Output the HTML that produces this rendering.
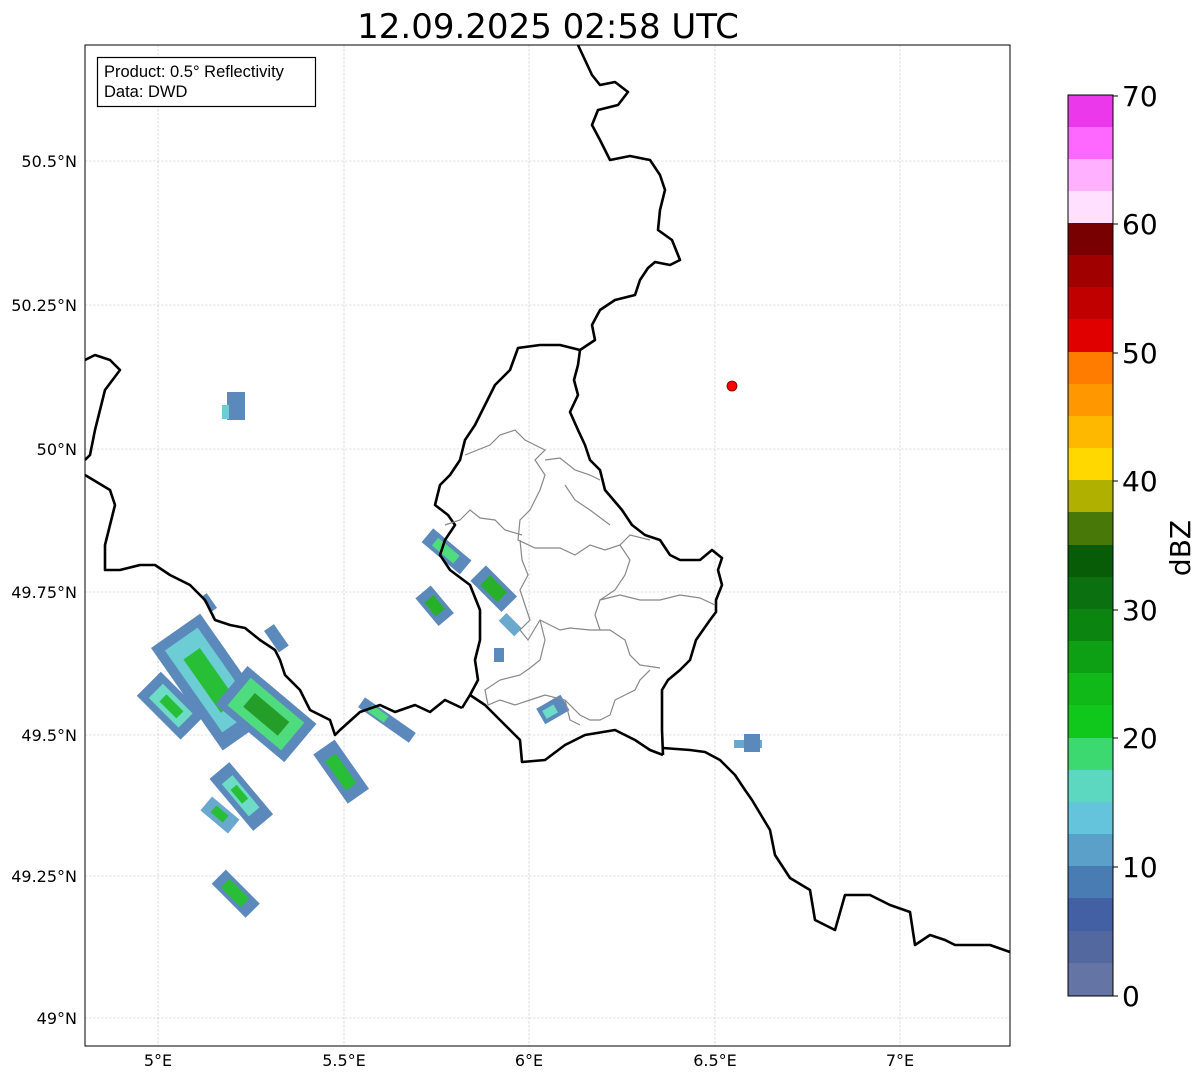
<!DOCTYPE html>
<html><head><meta charset="utf-8"><style>
body{margin:0;background:#fff;width:1202px;height:1081px;overflow:hidden;font-family:"Liberation Sans","DejaVu Sans",sans-serif}
svg{position:absolute;left:0;top:0}
</style></head><body>
<svg width="1202" height="1081" viewBox="0 0 1202 1081" xmlns="http://www.w3.org/2000/svg" font-family="DejaVu Sans, Liberation Sans, sans-serif">
<defs><clipPath id="c"><rect x="85" y="45" width="925" height="1001"/></clipPath></defs>
<text x="548" y="38" font-size="34" text-anchor="middle">12.09.2025 02:58 UTC</text>
<g clip-path="url(#c)">
<g stroke="#c4c4c4" stroke-width="0.6" stroke-dasharray="2.5,1.5">
<line x1="158" y1="45" x2="158" y2="1046"/><line x1="344" y1="45" x2="344" y2="1046"/><line x1="529" y1="45" x2="529" y2="1046"/><line x1="715" y1="45" x2="715" y2="1046"/><line x1="900" y1="45" x2="900" y2="1046"/>
<line x1="85" y1="161" x2="1010" y2="161"/><line x1="85" y1="305" x2="1010" y2="305"/><line x1="85" y1="449" x2="1010" y2="449"/><line x1="85" y1="592" x2="1010" y2="592"/><line x1="85" y1="735" x2="1010" y2="735"/><line x1="85" y1="876" x2="1010" y2="876"/><line x1="85" y1="1018" x2="1010" y2="1018"/>
</g>
<g opacity="0.9">
<g transform="rotate(55 210 680)"><rect x="150" y="650" width="125" height="60" fill="#4a7cb4"/><rect x="160" y="660" width="100" height="40" fill="#5cc8d0"/><rect x="178" y="670" width="65" height="20" fill="#10b820"/></g>
<g transform="rotate(45 170 705)"><rect x="140" y="688" width="62" height="34" fill="#4a7cb4"/><rect x="150" y="695" width="42" height="20" fill="#5cd8c0"/><rect x="160" y="700" width="24" height="10" fill="#10b820"/></g>
<g transform="rotate(40 265 712)"><rect x="222" y="688" width="90" height="50" fill="#4a7cb4"/><rect x="232" y="695" width="70" height="36" fill="#3cd870"/><rect x="245" y="704" width="45" height="18" fill="#0c9410"/></g>
<g transform="rotate(55 340 770)"><rect x="312" y="757" width="60" height="26" fill="#4a7cb4"/><rect x="324" y="764" width="36" height="13" fill="#10b820"/></g>
<g transform="rotate(50 240 795)"><rect x="208" y="782" width="68" height="26" fill="#4a7cb4"/><rect x="220" y="788" width="42" height="14" fill="#5cd8c0"/><rect x="230" y="791" width="18" height="8" fill="#10b820"/></g>
<g transform="rotate(40 220 815)"><rect x="202" y="806" width="36" height="18" fill="#5aa0c8"/><rect x="211" y="810" width="16" height="9" fill="#10b820"/></g>
<g transform="rotate(45 235 893)"><rect x="212" y="883" width="48" height="20" fill="#4a7cb4"/><rect x="221" y="887" width="28" height="12" fill="#10b820"/></g>
<g transform="rotate(35 388 722)"><rect x="355" y="715" width="62" height="12" fill="#4a7cb4"/><rect x="365" y="717" width="20" height="8" fill="#3cd870"/></g>
<g transform="rotate(55 275 638)"><rect x="263" y="631" width="26" height="12" fill="#4a7cb4"/></g>
<g transform="rotate(55 208 602)"><rect x="200" y="598" width="18" height="7" fill="#4a7cb4"/></g>
<rect x="227" y="392" width="18" height="28" fill="#4a7cb4"/><rect x="222" y="405" width="7" height="14" fill="#5cc8d0"/>
<g transform="rotate(40 445 550)"><rect x="422" y="541" width="50" height="18" fill="#4a7cb4"/><rect x="432" y="545" width="28" height="10" fill="#3cd870"/></g>
<g transform="rotate(45 493 588)"><rect x="472" y="577" width="44" height="22" fill="#4a7cb4"/><rect x="482" y="581" width="24" height="14" fill="#10a814"/></g>
<g transform="rotate(45 510 625)"><rect x="499" y="619" width="22" height="11" fill="#5aa0c8"/></g>
<g transform="rotate(50 434 605)"><rect x="417" y="595" width="36" height="20" fill="#4a7cb4"/><rect x="426" y="599" width="18" height="12" fill="#10a814"/></g>
<rect x="494" y="648" width="10" height="14" fill="#4a7cb4"/>
<g transform="rotate(-30 552 710)"><rect x="539" y="701" width="28" height="18" fill="#4a7cb4"/><rect x="543" y="706" width="13" height="9" fill="#5cd8c0"/></g>
<rect x="734" y="740" width="28" height="8" fill="#5aa0c8"/><rect x="744" y="734" width="16" height="18" fill="#4a7cb4"/>
</g>
<g fill="none" stroke="#000" stroke-width="2.6" stroke-linejoin="round">
<polyline points="578,45 585,60 592,75 600,85 615,82 628,92 618,105 598,110 592,125 600,140 610,160 630,156 650,160 660,175 665,190 660,210 658,230 672,240 680,260 670,265 655,262 648,268 640,280 635,295 615,300 600,310 592,325 595,340 580,350 578,365 574,380 578,395 570,412 578,430 585,445 590,460 600,470 605,490 622,510 632,525 645,535 660,540 670,555 680,560 700,560 712,550 722,558 718,570 722,585 716,600 716,612 710,620 696,640 690,660 680,670 668,680 662,690 662,710 662,730 663,755"/>
<polyline points="663,748 690,750 705,752 720,760 735,775 745,790 752,800 770,830 775,855 790,878 810,890 815,920 835,930 845,895 870,895 890,905 910,912 915,945 930,935 945,940 955,945 975,945 990,945 1010,952"/>
<polyline points="580,350 560,345 540,345 518,348 510,370 495,385 485,405 475,425 465,440 460,460 450,475 440,485 435,505 448,515 455,525 445,540 440,555 450,570 470,585 480,610 480,640 475,660 478,680 470,695 462,708"/>
<polyline points="470,695 485,705 500,720 520,740 522,762 545,760 565,745 585,735 615,730 635,740 650,750 663,755"/>
<polyline points="462,708 445,700 430,712 415,705 395,712 380,705 360,712 340,730 335,735 330,720 310,710 300,690 285,675 280,660 275,650 260,640 245,628 230,625 215,620 205,600 190,585 170,575 155,565 140,565 120,570 105,570 105,545 115,505 110,490 90,478 85,475"/>
<polyline points="85,360 95,355 110,360 120,370 105,390 100,410 95,430 90,455 85,460"/>
</g>
<g fill="none" stroke="#888" stroke-width="1.2">
<polyline points="465,455 490,445 500,435 515,430 525,440 545,450 535,460 545,475 540,490 530,510 520,520 518,540 535,548 560,548 575,555 590,545 605,550 620,545 630,535 650,540"/>
<polyline points="445,525 460,520 470,510 480,518 495,520 505,530 522,535"/>
<polyline points="545,460 560,458 575,470 590,475 600,480"/>
<polyline points="565,485 575,500 590,510 610,525"/>
<polyline points="520,540 522,560 528,575 520,590 525,605 530,620 520,630 528,640 540,620 560,630 570,628 590,630 610,630 625,640 630,655 640,665 660,668"/>
<polyline points="620,545 630,560 625,575 615,590 600,600 595,615 600,630"/>
<polyline points="600,600 620,595 640,600 660,600 680,595 700,598 715,605"/>
<polyline points="540,620 545,640 540,660 530,668 520,675 500,680 485,690 488,705 500,700 515,705 530,700 545,695 565,700 580,715 590,720 600,720 610,715 615,700 625,695 635,690 640,680 650,670"/>
<polyline points="565,700 570,720 580,725"/>
</g>
<circle cx="732" cy="386" r="5" fill="#f00" stroke="#600" stroke-width="0.8"/>
</g>
<rect x="85" y="45" width="925" height="1001" fill="none" stroke="#000" stroke-width="1"/>
<rect x="97.5" y="57.5" width="218" height="49" fill="#fff" stroke="#000" stroke-width="1.2"/>
<text x="104" y="77" font-size="16.5" font-family="Liberation Sans, sans-serif">Product: 0.5° Reflectivity</text>
<text x="104" y="97" font-size="16.5" font-family="Liberation Sans, sans-serif">Data: DWD</text>
<g font-size="16" text-anchor="end">
<text x="77" y="167">50.5°N</text><text x="77" y="311">50.25°N</text><text x="77" y="455">50°N</text><text x="77" y="598">49.75°N</text><text x="77" y="741">49.5°N</text><text x="77" y="882">49.25°N</text><text x="77" y="1024">49°N</text>
</g>
<g font-size="16" text-anchor="middle">
<text x="158" y="1066">5°E</text><text x="344" y="1066">5.5°E</text><text x="529" y="1066">6°E</text><text x="715" y="1066">6.5°E</text><text x="900" y="1066">7°E</text>
</g>
<g>
<rect x="1068" y="95" width="45" height="33" fill="#ea38ea"/>
<rect x="1068" y="127" width="45" height="33" fill="#ff68ff"/>
<rect x="1068" y="159" width="45" height="33" fill="#ffb0ff"/>
<rect x="1068" y="191" width="45" height="33" fill="#ffe0ff"/>
<rect x="1068" y="223" width="45" height="33" fill="#780000"/>
<rect x="1068" y="255" width="45" height="33" fill="#a00000"/>
<rect x="1068" y="287" width="45" height="33" fill="#c00000"/>
<rect x="1068" y="319" width="45" height="34" fill="#e00000"/>
<rect x="1068" y="352" width="45" height="33" fill="#ff7c00"/>
<rect x="1068" y="384" width="45" height="33" fill="#ff9800"/>
<rect x="1068" y="416" width="45" height="33" fill="#ffb800"/>
<rect x="1068" y="448" width="45" height="33" fill="#ffd800"/>
<rect x="1068" y="480" width="45" height="33" fill="#b0b000"/>
<rect x="1068" y="512" width="45" height="34" fill="#487808"/>
<rect x="1068" y="545" width="45" height="33" fill="#085c08"/>
<rect x="1068" y="577" width="45" height="33" fill="#0a7010"/>
<rect x="1068" y="609" width="45" height="33" fill="#0c8410"/>
<rect x="1068" y="641" width="45" height="33" fill="#0ea014"/>
<rect x="1068" y="673" width="45" height="33" fill="#10b818"/>
<rect x="1068" y="705" width="45" height="34" fill="#10c81c"/>
<rect x="1068" y="738" width="45" height="33" fill="#3cd870"/>
<rect x="1068" y="770" width="45" height="33" fill="#5cd8c0"/>
<rect x="1068" y="802" width="45" height="33" fill="#64c4dc"/>
<rect x="1068" y="834" width="45" height="33" fill="#5aa0c8"/>
<rect x="1068" y="866" width="45" height="33" fill="#4a7cb4"/>
<rect x="1068" y="898" width="45" height="34" fill="#4460a4"/>
<rect x="1068" y="931" width="45" height="33" fill="#5468a0"/>
<rect x="1068" y="963" width="45" height="33" fill="#6474a4"/>
<rect x="1068" y="95" width="45" height="901" fill="none" stroke="#000" stroke-width="1"/>
<g stroke="#000"><line x1="1113" y1="96" x2="1118" y2="96"/><line x1="1113" y1="224" x2="1118" y2="224"/><line x1="1113" y1="353" x2="1118" y2="353"/><line x1="1113" y1="481" x2="1118" y2="481"/><line x1="1113" y1="610" x2="1118" y2="610"/><line x1="1113" y1="738" x2="1118" y2="738"/><line x1="1113" y1="867" x2="1118" y2="867"/><line x1="1113" y1="996" x2="1118" y2="996"/></g>
<g font-size="28"><text x="1122" y="106">70</text><text x="1122" y="234">60</text><text x="1122" y="363">50</text><text x="1122" y="491">40</text><text x="1122" y="620">30</text><text x="1122" y="748">20</text><text x="1122" y="877">10</text><text x="1122" y="1006">0</text></g>
<text transform="translate(1190 548) rotate(-90)" font-size="28" text-anchor="middle">dBZ</text>
</g>
</svg>
</body></html>
